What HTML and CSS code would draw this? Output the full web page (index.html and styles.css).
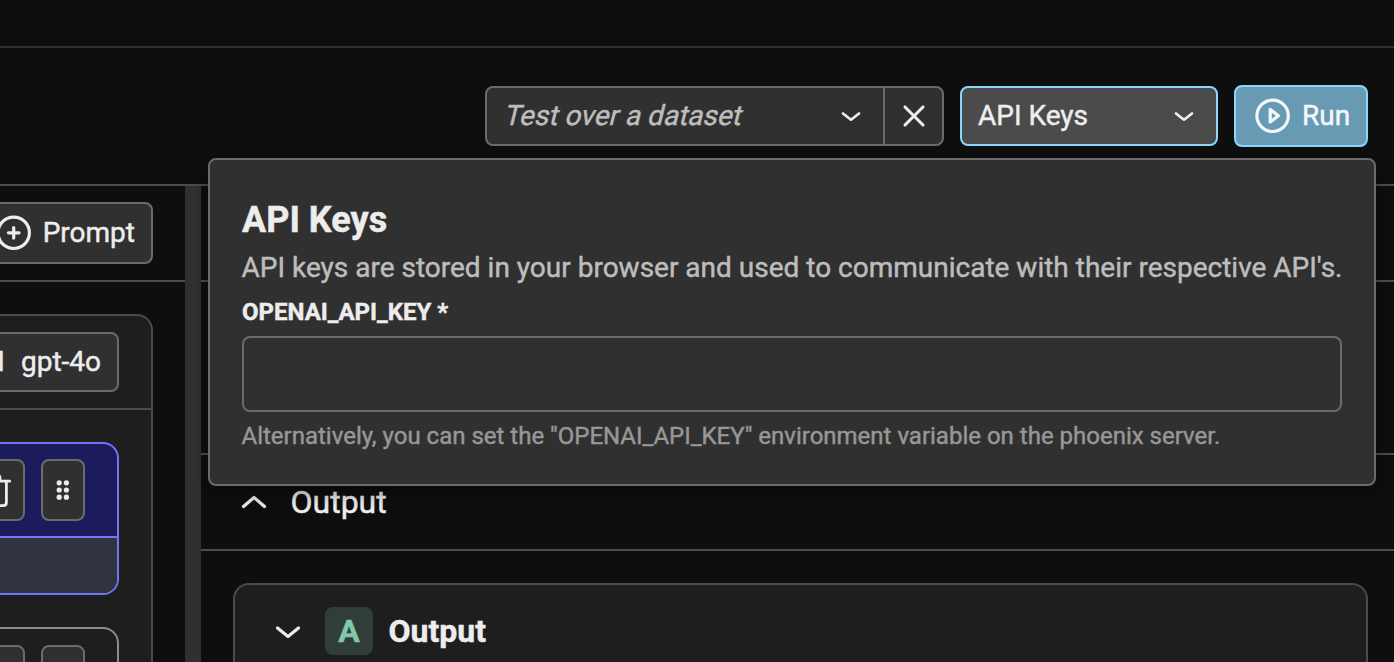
FILE: index.html
```html
<!DOCTYPE html>
<html lang="en">
<head>
<meta charset="utf-8">
<title>Playground</title>
<link rel="stylesheet" href="styles.css">
</head>
<body>
<div class="app">
  <div class="navbar"></div>
  <header class="toolbar">
    <div class="dataset">
      <button class="dataset-select"><span class="placeholder">Test over a dataset</span>
        <svg class="chev" width="20" height="12" viewBox="0 0 20 12"><path d="M2 3.500 10 9.700 18 3.500"/></svg></button>
      <button class="dataset-clear"><svg class="cross" width="24" height="24" viewBox="0 0 24 24"><path d="M3 3 21 21M21 3 3 21"/></svg></button>
    </div>
    <button class="keys-button"><span>API Keys</span>
      <svg class="chev" width="20" height="12" viewBox="0 0 20 12"><path d="M2 3.500 10 9.700 18 3.500"/></svg></button>
    <button class="run-button">
      <svg class="icon" width="36" height="36" viewBox="0 0 36 36"><circle cx="18.600" cy="17.800" r="15.700"/><path d="M16.200 11.500v12.600L24.400 17.800Z"/></svg>
      <span>Run</span></button>
  </header>
  <main class="panes">
    <section class="left">
      <div class="left-bar">
        <button class="prompt-button">
          <svg class="icon" width="36" height="36" viewBox="0 0 36 36"><circle cx="17.700" cy="17.800" r="15.700"/><path d="M17.700 12.500v10.600M12.400 17.800h10.600"/></svg>
          <span>Prompt</span></button>
      </div>
      <div class="prompt-card">
        <div class="card-head"><button class="model-button"><span>OpenAI</span><span>gpt-4o</span></button></div>
        <div class="messages">
          <div class="message active">
            <div class="message-head">
              <button class="tool delete"><svg class="trash" width="28" height="36" viewBox="0 0 28 36"><path d="M-5 9.200H23.700M3 9V6Q3 3 6 3H11Q14 3 14 6V9M-1 9.200V30.500Q-1 33.700 2 33.700H17Q20.400 33.700 20.400 30.500V9.200"/></svg></button>
              <button class="tool"><svg class="dots" width="14" height="22" viewBox="0 0 14 22"><circle cx="3.200" cy="3.800" r="2.600"/><circle cx="10.400" cy="3.800" r="2.600"/><circle cx="3.200" cy="11" r="2.600"/><circle cx="10.400" cy="11" r="2.600"/><circle cx="3.200" cy="18.200" r="2.600"/><circle cx="10.400" cy="18.200" r="2.600"/></svg></button>
            </div>
            <div class="message-body"></div>
          </div>
          <div class="message idle">
            <div class="message-head"><button class="tool delete"></button><button class="tool"></button></div>
          </div>
        </div>
      </div>
    </section>
    <div class="handle"></div>
    <section class="right">
      <div class="inputs-head"></div>
      <div class="inputs-body"></div>
      <div class="output-head">
        <svg class="chev wide" width="26" height="16" viewBox="0 0 26 16"><path d="M2.500 12.500 13 3.500 23.500 12.500"/></svg>
        <span>Output</span></div>
      <div class="output-card">
        <svg class="chev wide" width="26" height="16" viewBox="0 0 26 16"><path d="M2.500 5 13 13.500 23.500 5"/></svg>
        <span class="badge">A</span><span>Output</span></div>
    </section>
  </main>
  <div class="popover">
    <h2>API Keys</h2>
    <p class="intro">API keys are stored in your browser and used to communicate with their respective API's.</p>
    <label class="key-label" for="key">OPENAI_API_KEY *</label>
    <input class="key-input" id="key" type="password">
    <p class="help">Alternatively, you can set the "OPENAI_API_KEY" environment variable on the phoenix server.</p>
  </div>
</div>
</body>
</html>
```
FILE: styles.css
```css
* { box-sizing: border-box; }
body { margin: 0; background: #0e0e0e; color: #ededed; font: 28px/40px Roboto, sans-serif; -webkit-text-stroke: 0.45px currentColor; }
button { font: inherit; color: inherit; margin: 0; padding: 0; background: #303030; border: 2px solid #6b6b6b; border-radius: 8px; display: flex; align-items: center; white-space: nowrap; flex: none; }
svg { flex: none; fill: none; stroke: currentColor; stroke-linecap: round; stroke-linejoin: round; }
.app { position: relative; width: 1394px; height: 662px; overflow: hidden; display: flex; flex-direction: column; }
.navbar { height: 48px; flex: none; border-bottom: 2px solid #303030; }
.toolbar { height: 138px; flex: none; border-bottom: 2px solid #4b4b4b; display: flex; justify-content: flex-end; align-items: center; gap: 16px; padding: 0 26px 0 0; }
.chev { stroke-width: 2.7; }
.wide { stroke-width: 3.2; }
.icon { stroke-width: 3.2; }
.cross { stroke-width: 3.1; }
.dataset { display: flex; width: 459px; height: 60px; }
.dataset-select { width: 400px; justify-content: space-between; padding: 0 22px 0 15.5px; border-radius: 8px 0 0 8px; }
.dataset-clear { width: 61px; margin-left: -2px; justify-content: center; border-radius: 0 8px 8px 0; }
.placeholder { display: inline-block; transform: skewX(-14deg); transform-origin: 0 30px; color: #bdbdbd; }
.keys-button { width: 258px; height: 60px; padding: 0 22px 0 16px; justify-content: space-between; background: #4b4b4b; border-color: #8bd7fb; }
.run-button { width: 134px; height: 62px; padding-left: 18px; gap: 12px; background: #689bb3; border-color: #8bd7fb; color: #f4f8fa; }
.panes { flex: 1; min-height: 0; display: flex; }
.left { width: 185px; flex: none; overflow: hidden; }
.left-bar { height: 96px; border-bottom: 2px solid #4b4b4b; display: flex; justify-content: flex-end; padding: 16px 32px 0 0; }
.prompt-button { height: 62px; padding: 0 16px 0 14px; gap: 11px; }
.prompt-card { height: 400px; margin: 32px 32px 0 -60px; background: #1e1e1e; border: 2px solid #4b4b4b; border-radius: 16px; }
.card-head { height: 94px; border-bottom: 2px solid #4b4b4b; display: flex; justify-content: flex-end; padding: 16px 32px 0 0; }
.model-button { height: 60px; padding: 0 16px; gap: 16px; }
.messages { padding: 32px 32px 0 0; display: flex; flex-direction: column; gap: 32px; }
.message { height: 153px; border: 2px solid #8c8c8c; border-radius: 16px; overflow: hidden; }
.message-head { height: 94px; display: flex; justify-content: flex-end; gap: 16px; padding: 15px 32px 0 0; }
.idle .message-head { padding-top: 16px; }
.tool { width: 44px; height: 62px; justify-content: center; }
.delete { width: 60px; justify-content: flex-end; padding-right: 9px; }
.active { border-color: #7275f5; background: #1c1c5c; }
.active .message-head { border-bottom: 2px solid #7275f5; }
.message-body { height: 60px; background: #30343e; }
.trash { stroke-width: 2.8; overflow: visible; }
.dots { fill: currentColor; stroke: none; }
.handle { width: 16px; flex: none; background: #303030; }
.right { flex: 1; min-width: 0; }
.inputs-head { height: 96px; border-bottom: 2px solid #4b4b4b; }
.inputs-body { height: 173px; border-bottom: 2px solid #4b4b4b; }
.output-head { height: 96px; border-bottom: 2px solid #4b4b4b; display: flex; align-items: center; gap: 23.5px; padding-left: 40px; font-size: 32px; }
.output-card { height: 120px; margin: 32px 26px 0 32px; border: 2px solid #4b4b4b; border-radius: 16px; background: #1e1e1e; display: flex; align-items: center; padding: 0 0 24px 40px; font-size: 32px; font-weight: 700; }
.badge { width: 48px; height: 48px; margin: 0 15.5px 0 24px; border-radius: 8px; background: #313d39; color: #80c7ab; display: flex; align-items: center; justify-content: center; }
.popover { position: absolute; left: 208px; top: 158px; width: 1168px; height: 328px; padding: 38px 32px 0; background: #303030; border: 2px solid #6b6b6b; border-radius: 8px; box-shadow: 0 8px 16px rgba(0,0,0,.4); }
.popover h2 { margin: 0; font-size: 36px; line-height: 44px; font-weight: 700; }
.intro { margin: 6px 0 0 -0.5px; color: #bdbdbd; white-space: nowrap; }
.key-label { display: block; margin-top: 8px; font-size: 24px; line-height: 32px; font-weight: 700; }
.key-input { display: block; width: 100%; height: 76px; margin-top: 8px; background: transparent; border: 2px solid #6b6b6b; border-radius: 8px; color: inherit; font: inherit; }
.help { margin: 8px 0 0 -0.5px; font-size: 24px; line-height: 32px; color: #979797; white-space: nowrap; }
```
